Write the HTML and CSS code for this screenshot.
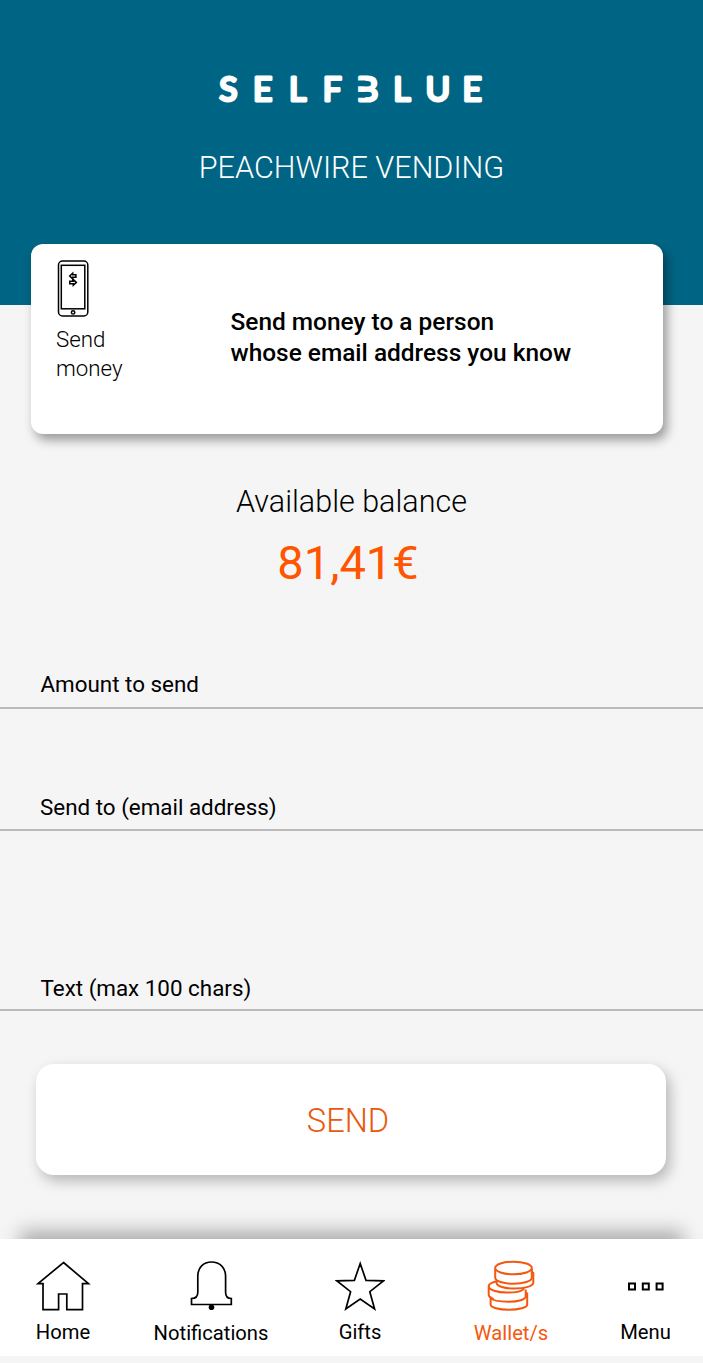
FILE: index.html
```html
<!DOCTYPE html>
<html lang="en">
<head>
<meta charset="utf-8">
<title>Selfblue – Send money</title>
<link rel="stylesheet" href="styles.css">
</head>
<body>
<div class="app">
  <header class="header">
    <svg class="logo" width="270" height="36" viewBox="217 72 270 36" role="img" aria-label="Selfblue">
      <text class="logo-text" y="101.3" x="219.3 253 289 322.8 356.4 393.2 425.4 462.4">SELFBLUE</text>
      <path class="logo-gap" d="M354 80.6h11.5v5.6H354zM354 92h11.5v5.8H354z"/>
    </svg>
    <h1 class="title">PEACHWIRE VENDING</h1>
  </header>

  <main class="content">
    <section class="card">
      <div class="card-kind">
        <svg class="phone" width="32" height="58" viewBox="0 0 32 58">
          <rect x="1.5" y="1" width="29.3" height="55" rx="4"/>
          <rect x="4.3" y="5.3" width="23.5" height="43.5"/>
          <circle cx="16.1" cy="52.4" r="1.7"/>
          <path d="M12.7 16l3-2.8v1.6h3.2v2.5h-3.2v1.6zM19.3 22.4l-3-2.8v1.6h-3.5v2.500h3.500v1.600zM15.800 18v3.500"/>
        </svg>
        <p class="kind-label">Send<br>money</p>
      </div>
      <p class="card-text">Send money to a person<br>whose email address you know</p>
    </section>

    <section class="balance">
      <h2 class="balance-label">Available balance</h2>
      <p class="balance-value">81,41€</p>
    </section>

    <form class="form">
      <label class="field field-amount">Amount to send</label>
      <label class="field field-email">Send to (email address)</label>
      <label class="field field-note">Text (max 100 chars)</label>
      <button class="send" type="button">SEND</button>
    </form>
  </main>

  <nav class="nav">
    <a class="tab tab-home">
      <svg class="icon" width="56" height="52" viewBox="0 0 56 52"><path d="M28.500 2.500L53.500 23.700h-6v26h-15.700V34h-8.200v15.700H8v-26H3z"/></svg>
      <span class="tab-label">Home</span>
    </a>
    <a class="tab tab-notifications">
      <svg class="icon" width="44" height="52" viewBox="0 0 44 52"><path d="M2.500 44.500v-6c4.300 0 6.300-2.700 6.300-6.300V16.300C8.800 7.500 14.300 2 22.500 2S36.600 7.500 36.600 16.300v15.900c0 3.600 2 6.300 5.700 6.300v6z"/><circle class="clapper" cx="22.500" cy="47.200" r="2.800"/></svg>
      <span class="tab-label">Notifications</span>
    </a>
    <a class="tab tab-gifts">
      <svg class="icon" width="50" height="52" viewBox="0 0 50 52"><path d="M25.200 3.500L31 20.300l17.400.600L34.800 31.700l4.800 17.300L25.200 39 10.800 49l4.800-17.300L2 20.900 19.400 20.300z"/></svg>
      <span class="tab-label">Gifts</span>
    </a>
    <a class="tab tab-wallet">
      <svg class="icon icon-coins" width="50" height="52" viewBox="0 0 50 52">
        <path d="M4.600 36.500v8c0 3 8 5.200 18.300 5.200s18.300-2.200 18.300-5.200V33.500l-1.500-1M4.600 38c1.600 2.200 8.400 3.700 17.900 3.700 10.200 0 17.200-2.300 17.200-5.100v-7.100"/>
        <path d="M11.500 21.200C6 22.200 2.700 24 2.700 26.300c0 3.600 8.300 6.300 18.300 6.300 9 0 15-1.500 17.400-4.300M2.700 26.300v8.500c0 1.800 1.900 3.300 5 4.300"/>
        <path d="M9.200 8.500v9.300c0 3.300 8.300 6 18.300 6s18.300-2.700 18.300-6V8.500"/>
        <ellipse cx="27.500" cy="8" rx="18.300" ry="6.300"/>
        <path d="M10.600 20.600V23c0 3.200 8.100 5.600 18.200 5.600S47.300 26 47.300 22.800v-10l-1.500-1"/>
      </svg>
      <span class="tab-label">Wallet/s</span>
    </a>
    <a class="tab tab-menu">
      <svg class="icon icon-dots" width="38" height="52" viewBox="0 0 38 52"><path d="M2 23.500h6v6H2zM15.800 23.500h6v6h-6zM29.600 23.500h6v6h-6z"/></svg>
      <span class="tab-label">Menu</span>
    </a>
  </nav>
</div>
</body>
</html>
```

FILE: styles.css
```css
* { box-sizing: border-box; }
body {
  margin: 0;
  background: #f5f5f5;
  color: #000;
  font-family: Roboto, "Liberation Sans", sans-serif;
}
h1, h2, p { margin: 0; }

.app {
  display: flex;
  flex-direction: column;
  width: 703px;
  height: 1363px;
  overflow: hidden;
}

.header {
  display: flex;
  flex-direction: column;
  align-items: center;
  height: 304.6px;
  padding-top: 72px;
  background: #006584;
  color: #fff;
}
.logo { display: block; }
.logo-text {
  font: 400 33.6px Lato, sans-serif;
  fill: #fff;
  stroke: #fff;
  stroke-width: 3px;
  stroke-linejoin: round;
}
.logo-gap { fill: #006584; }
.title {
  margin-top: 40px;
  font-size: 30.6px;
  font-weight: 300;
  line-height: 40px;
}

.content {
  flex: none;
  height: 934.4px;
}
.card {
  display: flex;
  width: 632px;
  height: 190px;
  margin: -60.6px 0 0 31px;
  border-radius: 12px;
  background: #fff;
  box-shadow: 4px 6px 11px rgba(0, 0, 0, .38);
}
.card-kind {
  width: 199.5px;
  padding: 16px 0 0 25px;
}
.phone {
  display: block;
  margin-left: 1px;
  fill: none;
  stroke: #000;
  stroke-width: 1.5px;
}
.kind-label {
  margin-top: 7px;
  font-size: 22.3px;
  font-weight: 300;
  line-height: 29px;
}
.card-text {
  padding-top: 62px;
  font-size: 24.45px;
  font-weight: 500;
  line-height: 31.4px;
}

.balance {
  padding-top: 48px;
  text-align: center;
}
.balance-label {
  font-size: 30.5px;
  font-weight: 300;
  line-height: 40px;
}
.balance-value {
  margin: 11px 7px 0 0;
  color: #ff5500;
  font-size: 47px;
  line-height: 60px;
}

.form { padding-top: 77px; }
.field {
  display: flex;
  align-items: flex-end;
  padding: 0 40px 6px;
  border-bottom: 2px solid #bbb;
  font-size: 22.4px;
  line-height: 32px;
}
.field-amount { height: 39px; padding: 0 40.5px 7px; }
.field-email { height: 122px; }
.field-note { height: 180px; padding: 0 40.5px 5px; }
.send {
  display: block;
  width: 630px;
  height: 111px;
  margin: 53px 0 0 36px;
  padding: 3px 6px 0 0;
  border: 0;
  border-radius: 18px;
  background: #fff;
  box-shadow: 4px 6px 14px rgba(0, 0, 0, .26);
  color: #ea580c;
  font: 300 32.6px/40px Roboto, sans-serif;
}

.nav {
  display: flex;
  height: 117px;
  padding: 21px 0 0 35px;
  background: #fff;
  box-shadow: 0 -28px 18px -20px rgba(0, 0, 0, .3);
}
.tab {
  display: flex;
  flex-direction: column;
  align-items: center;
}
.tab-home { width: 56px; }
.tab-notifications { width: 118px; margin-left: 61px; }
.tab-gifts { width: 50px; margin-left: 65px; }
.tab-wallet { width: 78px; margin-left: 87px; color: #f4580f; }
.tab-menu { width: 54px; margin-left: 68.5px; }
.icon {
  display: block;
  fill: none;
  stroke: #000;
  stroke-width: 1.7px;
}
.clapper { fill: #000; stroke: none; }
.icon-coins { stroke: #f4580f; stroke-width: 2px; }
.icon-dots { stroke-width: 2px; }
.tab-label {
  margin-top: 7px;
  font-size: 20.2px;
  line-height: 26px;
}
.tab-notifications .tab-label,
.tab-wallet .tab-label { margin-top: 8px; }
```
